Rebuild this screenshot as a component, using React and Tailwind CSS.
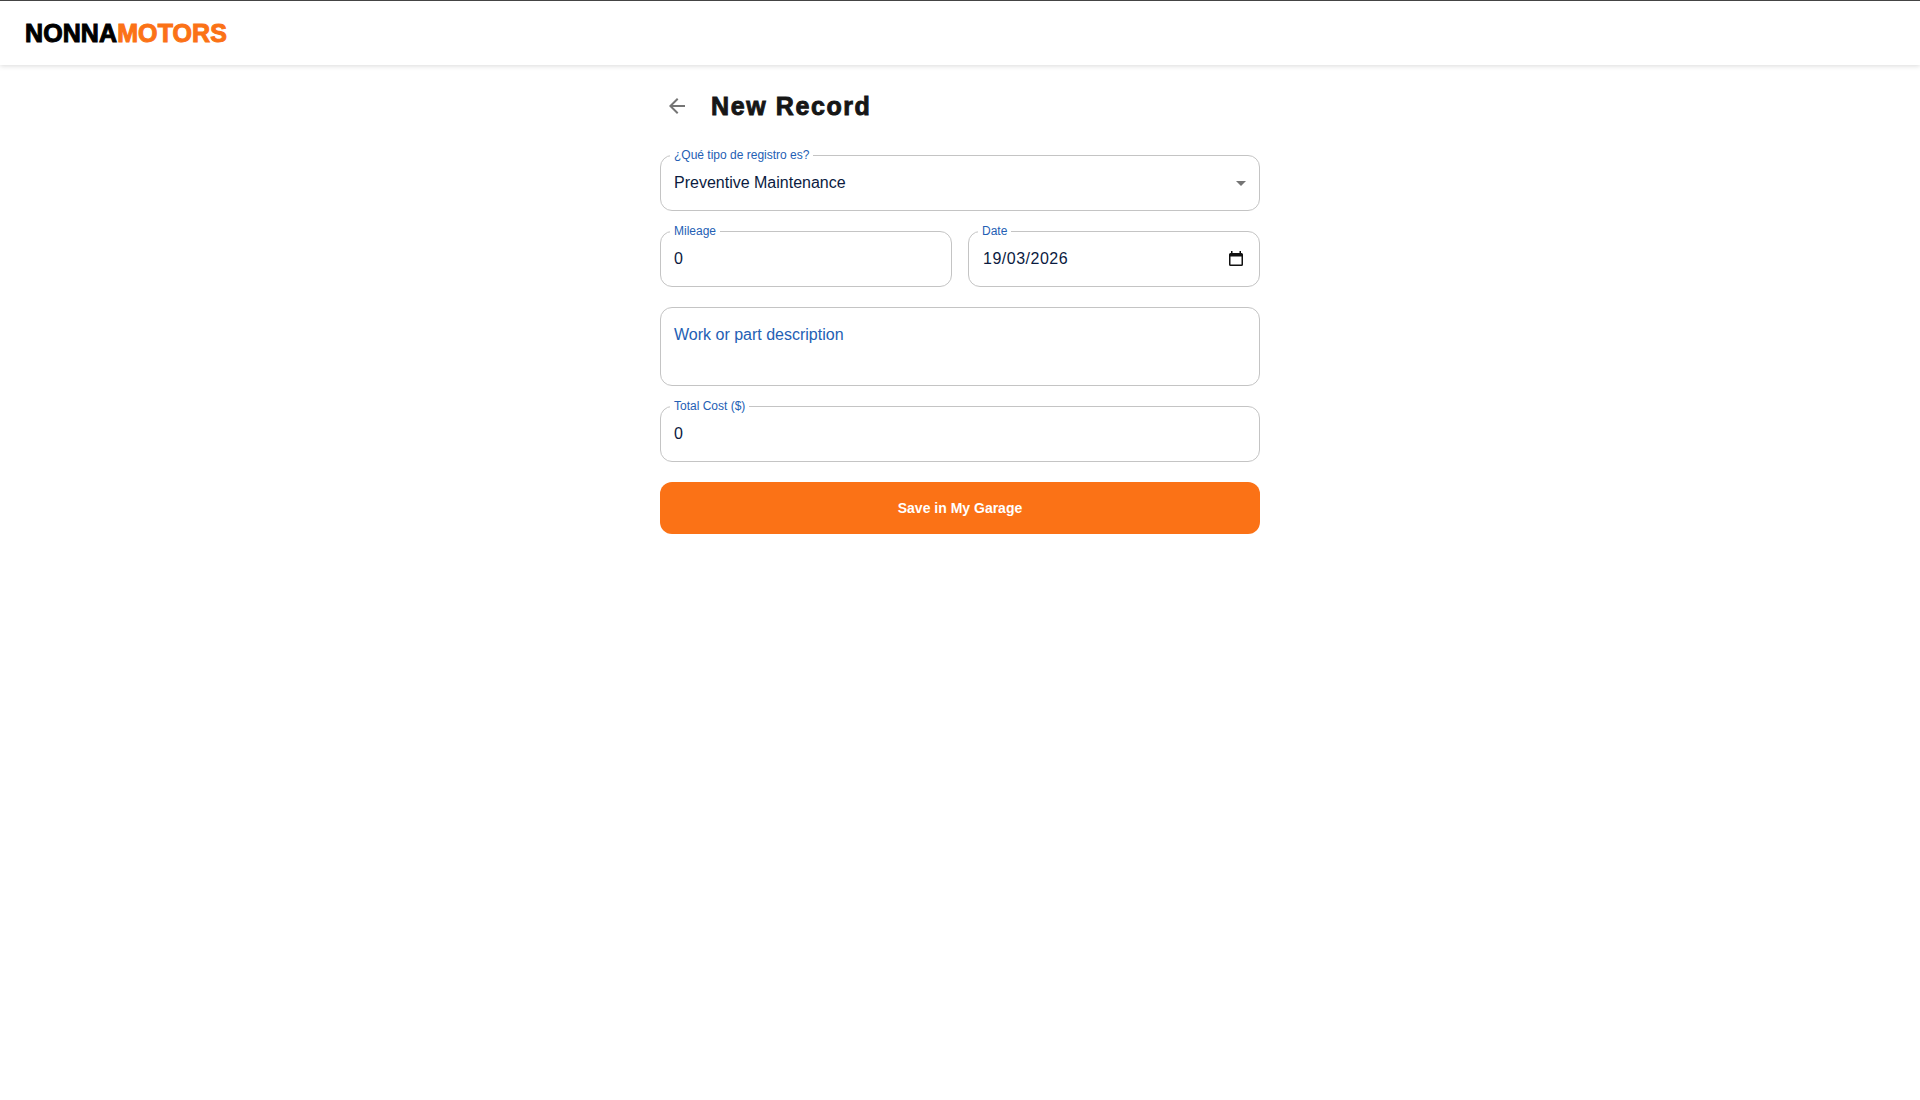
import React from 'react';

const Field = ({ label, value, right, valueClass = '', className = '' }) => (
  <div className={`relative h-14 w-full rounded-xl border border-[#c4c4c4] flex items-center justify-between pl-[13px] pr-[12px] ${className}`}>
    <span className="absolute -top-[9px] left-[9px] bg-white px-1 text-xs leading-4 text-[#2460b4]">{label}</span>
    <span className={`text-base text-[#0b1b3f] ${valueClass}`}>{value}</span>
    {right}
  </div>
);

const Caret = () => (
  <svg width="24" height="24" viewBox="0 0 24 24" className="fill-[#757575] -mr-[6px]">
    <path d="M7 10l5 5 5-5z" />
  </svg>
);

const CalendarIcon = () => (
  <svg width="16" height="16" viewBox="0 0 16 16" className="mr-[3px] -mt-[2px]">
    <path d="M3 1h1.5v2h7V1H13v2h.5A1.5 1.5 0 0 1 15 4.5v10a1.5 1.5 0 0 1-1.500 1.500h-11A1.5 1.5 0 0 1 1 14.500v-10A1.5 1.5 0 0 1 2.500 3H3zM2.500 6.500v8h11v-8z" fill="#111" />
  </svg>
);

const BackArrow = () => (
  <svg width="24" height="24" viewBox="0 0 24 24" className="fill-[#757575] -mt-[2px]">
    <path d="M20 11H7.830l5.590-5.590L12 4l-8 8 8 8 1.410-1.410L7.830 13H20z" />
  </svg>
);

export default function App() {
  return (
    <div className="min-h-screen bg-white font-['Liberation_Sans',Arial,sans-serif]">
      <header className="h-[65px] border-t border-[#444] bg-white shadow-[0_1px_5px_rgba(0,0,0,0.15)] flex items-center pl-[25px] pt-[1px]">
        <div className="text-[25px] leading-none font-bold [-webkit-text-stroke:1px] tracking-[0.1px]">
          <span className="text-black">NONNA</span>
          <span className="text-[#fb7216]">MOTORS</span>
        </div>
      </header>

      <main className="w-[600px] mx-auto pt-[24px]">
        <div className="flex items-center h-[36px] mb-[30px]">
          <div className="w-[34px] pl-[1px] ml-[4px] flex items-center"><BackArrow /></div>
          <h1 className="ml-[13px] text-[25px] leading-none font-bold [-webkit-text-stroke:0.9px] tracking-[1.6px] text-[#161616] -mt-[1px]">New Record</h1>
        </div>

        <div className="flex flex-col">
          <Field label="¿Qué tipo de registro es?" value="Preventive Maintenance" right={<Caret />} />
          <div className="flex gap-4 mt-5">
            <Field label="Mileage" value="0" />
            <Field label="Date" value="19/03/2026" right={<CalendarIcon />} valueClass="ml-[1px] tracking-[0.5px]" />
          </div>
          <div className="mt-5 h-[79px] rounded-xl border border-[#c4c4c4] pl-[13px] pt-[17px] text-base leading-5 text-[#2460b4]">
            Work or part description
          </div>
          <div className="mt-5">
            <Field label="Total Cost ($)" value="0" />
          </div>
          <button className="mt-5 h-[52px] rounded-xl bg-[#fb7216] text-white text-sm font-bold">
            Save in My Garage
          </button>
        </div>
      </main>
    </div>
  );
}
